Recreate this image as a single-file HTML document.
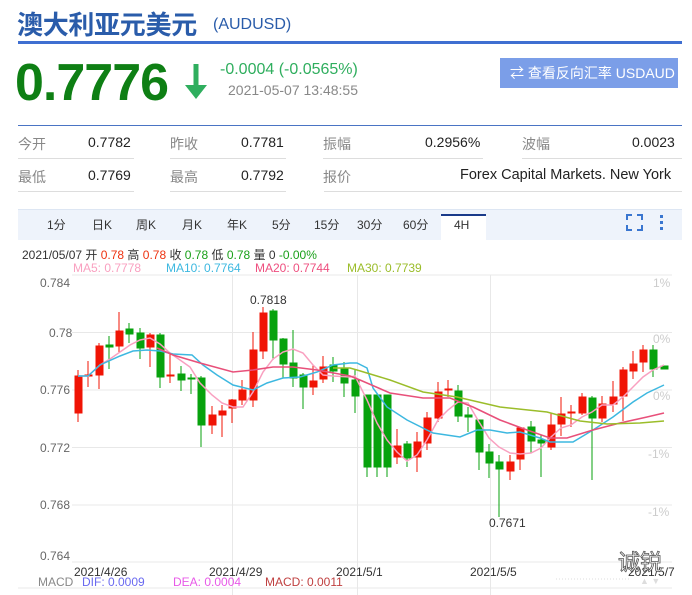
<!DOCTYPE html>
<html><head><meta charset="utf-8">
<style>
*{margin:0;padding:0;box-sizing:border-box}
body{width:692px;height:595px;overflow:hidden;background:#fff;font-family:"Liberation Sans","Noto Sans CJK SC",sans-serif;position:relative}
.a{position:absolute;white-space:nowrap}
.lbl{color:#888;font-size:14px}
.val{color:#222;font-size:14px}
.tab{position:absolute;top:216px;font-size:12px;color:#333}
</style></head><body>
<div class="a" style="left:17px;top:5px;font-size:26px;font-weight:bold;color:#2a5caa;letter-spacing:-0.3px">澳大利亚元美元</div>
<div class="a" style="left:213px;top:16px;font-size:16px;color:#2a5caa">(AUDUSD)</div>
<div class="a" style="left:18px;top:41px;width:664px;height:3px;background:#3f6fd1"></div>

<div class="a" style="left:15px;top:53px;font-size:52px;font-weight:bold;color:#0e7f14;letter-spacing:-1px;line-height:60px">0.7776</div>
<svg class="a" style="left:182px;top:62px" width="28" height="40"><path d="M14 2V26" stroke="#2fae5e" stroke-width="5"/><path d="M3 23L14 37L25 23Z" fill="#2fae5e"/></svg>
<div class="a" style="left:220px;top:61px;font-size:16px;color:#2fae5e">-0.0004 (-0.0565%)</div>
<div class="a" style="left:228px;top:82px;font-size:14px;color:#888">2021-05-07 13:48:55</div>
<div class="a" style="left:500px;top:58px;width:178px;height:30px;background:#7b9ee8;color:#fff;font-size:14px;line-height:30px;padding-left:10px">⇄ 查看反向汇率 USDAUD</div>

<div class="a" style="left:18px;top:125px;width:664px;height:1px;background:#4a74c4"></div>
<div class="a lbl" style="left:18px;top:134px">今开</div><div class="a val" style="left:88px;top:134px">0.7782</div>
<div class="a lbl" style="left:170px;top:134px">昨收</div><div class="a val" style="left:241px;top:134px">0.7781</div>
<div class="a lbl" style="left:323px;top:134px">振幅</div><div class="a val" style="left:425px;top:134px">0.2956%</div>
<div class="a lbl" style="left:522px;top:134px">波幅</div><div class="a val" style="left:632px;top:134px">0.0023</div>
<div class="a" style="left:18px;top:158px;width:116px;height:1px;background:#ddd"></div>
<div class="a" style="left:170px;top:158px;width:116px;height:1px;background:#ddd"></div>
<div class="a" style="left:323px;top:158px;width:160px;height:1px;background:#ddd"></div>
<div class="a" style="left:522px;top:158px;width:160px;height:1px;background:#ddd"></div>
<div class="a lbl" style="left:18px;top:167px">最低</div><div class="a val" style="left:88px;top:167px">0.7769</div>
<div class="a lbl" style="left:170px;top:167px">最高</div><div class="a val" style="left:241px;top:167px">0.7792</div>
<div class="a lbl" style="left:323px;top:167px">报价</div><div class="a val" style="left:460px;top:167px;font-size:14.5px">Forex Capital Markets. New York</div>
<div class="a" style="left:18px;top:191px;width:116px;height:1px;background:#ddd"></div>
<div class="a" style="left:170px;top:191px;width:116px;height:1px;background:#ddd"></div>
<div class="a" style="left:324px;top:191px;width:358px;height:1px;background:#ddd"></div>

<div class="a" style="left:18px;top:209px;width:664px;height:31px;background:#eef3fb;border-top:1px solid #dde6f3"></div>
<div class="a" style="left:441px;top:214px;width:45px;height:27px;background:#fff;border-top:2px solid #1a3a8a"></div>
<div class="tab" style="left:47px">1分</div><div class="tab" style="left:92px">日K</div><div class="tab" style="left:136px">周K</div>
<div class="tab" style="left:182px">月K</div><div class="tab" style="left:227px">年K</div><div class="tab" style="left:272px">5分</div>
<div class="tab" style="left:314px">15分</div><div class="tab" style="left:357px">30分</div><div class="tab" style="left:403px">60分</div>
<div class="tab" style="left:454px;top:218px">4H</div>
<svg class="a" style="left:626px;top:214px" width="46" height="18"><path d="M1 6V1H6M11 1H16V6M16 11V16H11M6 16H1V11" stroke="#3a76d0" stroke-width="2" fill="none"/><rect x="34" y="1" width="3" height="3" fill="#3a76d0"/><rect x="34" y="7" width="3" height="3" fill="#3a76d0"/><rect x="34" y="13" width="3" height="3" fill="#3a76d0"/></svg>

<div class="a" style="left:22px;top:246px;font-size:12px;color:#333">2021/05/07 开 <span style="color:#e31">0.78</span> 高 <span style="color:#e31">0.78</span> 收 <span style="color:#19a019">0.78</span> 低 <span style="color:#19a019">0.78</span> 量 0 <span style="color:#19a019">-0.00%</span></div>
<div class="a" style="top:261px;left:73px;font-size:12px;color:#f9a0c0">MA5: 0.7778</div>
<div class="a" style="top:261px;left:166px;font-size:12px;color:#3db8e0">MA10: 0.7764</div>
<div class="a" style="top:261px;left:255px;font-size:12px;color:#ee4f7f">MA20: 0.7744</div>
<div class="a" style="top:261px;left:347px;font-size:12px;color:#9bbd2a">MA30: 0.7739</div>

<svg class="a" style="left:0;top:0" width="692" height="595">
<g stroke="#e8e8e8" stroke-width="1">
<line x1="72" y1="275" x2="672" y2="275"/><line x1="72" y1="332.5" x2="672" y2="332.5"/><line x1="72" y1="390" x2="672" y2="390"/><line x1="72" y1="447.5" x2="672" y2="447.5"/><line x1="72" y1="505" x2="672" y2="505"/><line x1="72" y1="562" x2="672" y2="562"/>
<line x1="232.5" y1="275" x2="232.5" y2="595"/><line x1="357.5" y1="275" x2="357.5" y2="595"/><line x1="490.5" y1="275" x2="490.5" y2="595"/>
</g>
<g font-size="12" fill="#666" font-family="Liberation Sans,sans-serif">
<text x="40" y="287">0.784</text><text x="49" y="337">0.78</text><text x="40" y="394">0.776</text><text x="40" y="452">0.772</text><text x="40" y="509">0.768</text><text x="40" y="560">0.764</text>
</g>
<g font-size="12" fill="#ccc" font-family="Liberation Sans,sans-serif">
<text x="653" y="287">1%</text><text x="653" y="343">0%</text><text x="653" y="400">0%</text><text x="648" y="458">-1%</text><text x="648" y="516">-1%</text>
</g>
<g font-size="12" fill="#333" font-family="Liberation Sans,sans-serif">
<text x="250" y="304">0.7818</text><text x="489" y="527">0.7671</text>
<text x="74" y="576">2021/4/26</text><text x="209" y="576">2021/4/29</text><text x="336" y="576">2021/5/1</text><text x="470" y="576">2021/5/5</text><text x="628" y="576">2021/5/7</text>
</g>
<g id="c">
<g fill="#f01405" stroke="#f01405" stroke-width="1">
<line x1="78" y1="370" x2="78" y2="422"/><rect x="75" y="376" width="7" height="37"/>
<line x1="88" y1="361" x2="88" y2="387"/><rect x="85" y="375" width="7" height="1"/>
<line x1="99" y1="343" x2="99" y2="389"/><rect x="96" y="346" width="7" height="29"/>
<line x1="119" y1="312" x2="119" y2="352"/><rect x="116" y="331" width="7" height="15"/>
<line x1="150" y1="333" x2="150" y2="367"/><rect x="147" y="335" width="7" height="12"/>
<line x1="170" y1="353" x2="170" y2="383"/><rect x="167" y="375" width="7" height="1"/>
<line x1="212" y1="406" x2="212" y2="434"/><rect x="209" y="415" width="7" height="10"/>
<line x1="222" y1="405" x2="222" y2="437"/><rect x="219" y="411" width="7" height="4"/>
<line x1="232" y1="399" x2="232" y2="423"/><rect x="229" y="400" width="7" height="8"/>
<line x1="242" y1="380" x2="242" y2="405"/><rect x="239" y="390" width="7" height="10"/>
<line x1="253" y1="332" x2="253" y2="407"/><rect x="250" y="350" width="7" height="50"/>
<line x1="263" y1="307" x2="263" y2="359"/><rect x="260" y="313" width="7" height="38"/>
<line x1="313" y1="365" x2="313" y2="395"/><rect x="310" y="381" width="7" height="6"/>
<line x1="323" y1="356" x2="323" y2="383"/><rect x="320" y="367" width="7" height="12"/>
<line x1="397" y1="429" x2="397" y2="464"/><rect x="394" y="446" width="7" height="11"/>
<line x1="417" y1="432" x2="417" y2="472"/><rect x="414" y="442" width="7" height="15"/>
<line x1="427" y1="412" x2="427" y2="450"/><rect x="424" y="418" width="7" height="25"/>
<line x1="438" y1="382" x2="438" y2="422"/><rect x="435" y="392" width="7" height="26"/>
<line x1="448" y1="380" x2="448" y2="397"/><rect x="445" y="389" width="7" height="1"/>
<line x1="510" y1="455" x2="510" y2="480"/><rect x="507" y="462" width="7" height="9"/>
<line x1="520" y1="427" x2="520" y2="470"/><rect x="517" y="428" width="7" height="31"/>
<line x1="551" y1="413" x2="551" y2="450"/><rect x="548" y="425" width="7" height="22"/>
<line x1="561" y1="397" x2="561" y2="436"/><rect x="558" y="414" width="7" height="10"/>
<line x1="571" y1="405" x2="571" y2="427"/><rect x="568" y="412" width="7" height="1"/>
<line x1="582" y1="393" x2="582" y2="415"/><rect x="579" y="397" width="7" height="16"/>
<line x1="602" y1="396" x2="602" y2="422"/><rect x="599" y="404" width="7" height="14"/>
<line x1="613" y1="381" x2="613" y2="412"/><rect x="610" y="397" width="7" height="7"/>
<line x1="623" y1="367" x2="623" y2="421"/><rect x="620" y="370" width="7" height="26"/>
<line x1="633" y1="351" x2="633" y2="379"/><rect x="630" y="364" width="7" height="7"/>
<line x1="643" y1="345" x2="643" y2="372"/><rect x="640" y="350" width="7" height="12"/>
</g>
<g fill="#07a20d" stroke="#07a20d" stroke-width="1">
<line x1="109" y1="336" x2="109" y2="369"/><rect x="106" y="345" width="7" height="2"/>
<line x1="129" y1="323" x2="129" y2="343"/><rect x="126" y="329" width="7" height="5"/>
<line x1="140" y1="328" x2="140" y2="359"/><rect x="137" y="333" width="7" height="15"/>
<line x1="160" y1="333" x2="160" y2="388"/><rect x="157" y="335" width="7" height="42"/>
<line x1="181" y1="366" x2="181" y2="391"/><rect x="178" y="374" width="7" height="6"/>
<line x1="191" y1="374" x2="191" y2="394"/><rect x="188" y="378" width="7" height="1"/>
<line x1="201" y1="376" x2="201" y2="447"/><rect x="198" y="378" width="7" height="47"/>
<line x1="273" y1="309" x2="273" y2="360"/><rect x="270" y="311" width="7" height="29"/>
<line x1="283" y1="338" x2="283" y2="378"/><rect x="280" y="339" width="7" height="25"/>
<line x1="293" y1="330" x2="293" y2="387"/><rect x="290" y="363" width="7" height="15"/>
<line x1="303" y1="373" x2="303" y2="409"/><rect x="300" y="375" width="7" height="12"/>
<line x1="333" y1="357" x2="333" y2="382"/><rect x="330" y="365" width="7" height="6"/>
<line x1="344" y1="362" x2="344" y2="397"/><rect x="341" y="369" width="7" height="14"/>
<line x1="355" y1="370" x2="355" y2="413"/><rect x="352" y="380" width="7" height="16"/>
<line x1="367" y1="395" x2="367" y2="477"/><rect x="364" y="395" width="7" height="72"/>
<line x1="377" y1="395" x2="377" y2="477"/><rect x="374" y="395" width="7" height="72"/>
<line x1="387" y1="395" x2="387" y2="477"/><rect x="384" y="395" width="7" height="72"/>
<line x1="407" y1="441" x2="407" y2="467"/><rect x="404" y="444" width="7" height="14"/>
<line x1="458" y1="385" x2="458" y2="422"/><rect x="455" y="391" width="7" height="25"/>
<line x1="468" y1="407" x2="468" y2="432"/><rect x="465" y="415" width="7" height="2"/>
<line x1="479" y1="420" x2="479" y2="470"/><rect x="476" y="420" width="7" height="32"/>
<line x1="489" y1="444" x2="489" y2="478"/><rect x="486" y="452" width="7" height="11"/>
<line x1="499" y1="455" x2="499" y2="517"/><rect x="496" y="462" width="7" height="7"/>
<line x1="531" y1="421" x2="531" y2="453"/><rect x="528" y="427" width="7" height="14"/>
<line x1="541" y1="435" x2="541" y2="477"/><rect x="538" y="440" width="7" height="3"/>
<line x1="592" y1="396" x2="592" y2="480"/><rect x="589" y="398" width="7" height="20"/>
<line x1="653" y1="345" x2="653" y2="377"/><rect x="650" y="350" width="7" height="19"/>
<rect x="661" y="366" width="7" height="3"/>
</g>
</g>
<g fill="none" stroke-width="1.5">
<polyline stroke="#f9a0c0" points="78,376 88,376 100,365 110,359 120,352 130,345 140,340 150,338 160,344 170,353 180,360 190,367 200,383 212,395 222,403 233,407 243,407 253,392 263,372 273,359 283,352 293,349 303,353 313,365 323,375 333,376 350,377 355,376 367,400 377,423 387,440 397,452 407,461 417,455 427,440 438,420 448,410 458,402 468,403 479,422 489,438 499,447 510,453 520,454 531,453 541,448 551,437 561,428 571,425 582,417 592,412 602,405 613,405 623,397 633,387 643,377 653,370 664,365"/>
<polyline stroke="#3db8e0" points="78,376 88,376 100,365 120,356 133,351 147,350 160,351 173,354 192,355 203,365 217,375 233,385 253,390 267,383 283,378 300,377 317,372 333,365 350,363 357,363 367,368 373,388 387,407 407,420 433,433 460,437 477,430 490,430 507,433 520,432 540,438 550,442 573,442 593,430 613,417 633,402 647,393 664,385"/>
<polyline stroke="#e8507a" stroke-width="1.6" points="157,348 173,355 200,363 233,372 253,370 273,367 293,367 317,370 350,376 360,380 390,393 423,398 450,398 473,407 500,420 527,430 550,438 567,438 593,430 620,423 647,417 664,413"/>
<polyline stroke="#9bbd2a" points="333,368 350,368 357,370 390,380 423,392 457,397 500,407 547,412 580,421 607,424 640,423 664,421"/>
</g>
<line x1="18" y1="588" x2="672" y2="588" stroke="#e8e8e8"/>
<line x1="556" y1="579" x2="630" y2="579" stroke="#ddd" stroke-dasharray="1,2"/>
<text x="640" y="584" font-size="9" fill="#ddd">▲ ▼</text>
<text x="618" y="570" font-size="22" fill="#fff" stroke="#555" stroke-width="0.8" font-family="Noto Sans CJK SC,sans-serif">诚锐</text>
</svg>
<div class="a" style="left:38px;top:575px;font-size:12px;color:#888">MACD</div>
<div class="a" style="left:82px;top:575px;font-size:12px;color:#6a6af0">DIF: 0.0009</div>
<div class="a" style="left:173px;top:575px;font-size:12px;color:#e85ae8">DEA: 0.0004</div>
<div class="a" style="left:265px;top:575px;font-size:12px;color:#c04040">MACD: 0.0011</div>
</body></html>
